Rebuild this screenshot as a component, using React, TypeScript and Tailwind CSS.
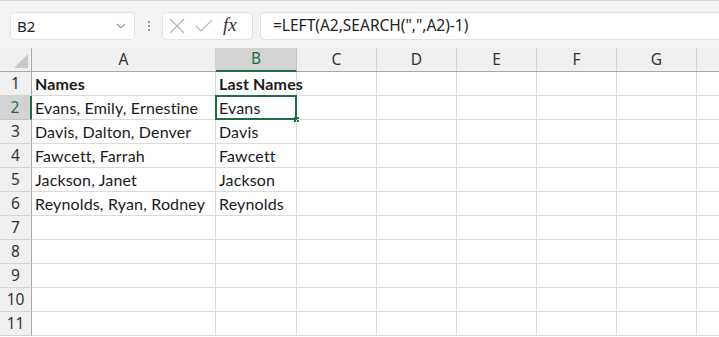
import { ChevronDown } from 'lucide-react';

const cols = ['A', 'B', 'C', 'D', 'E', 'F', 'G', ''];
const widths = ['w-[184px]', 'w-[81px]', 'w-[80px]', 'w-[80px]', 'w-[80px]', 'w-[80px]', 'w-[80px]', 'w-[80px]'];

const data: Record<number, [string, string]> = {
    1: ['Names', 'Last Names'],
    2: ['Evans, Emily, Ernestine', 'Evans'],
    3: ['Davis, Dalton, Denver', 'Davis'],
    4: ['Fawcett, Farrah', 'Fawcett'],
    5: ['Jackson, Janet', 'Jackson'],
    6: ['Reynolds, Ryan, Rodney', 'Reynolds'],
};

const rows = [1, 2, 3, 4, 5, 6, 7, 8, 9, 10, 11];

export default function App() {
    return (
        <div className="w-[719px] h-[337px] overflow-hidden bg-white font-['Noto_Sans',sans-serif] text-[#222]">
            {/* Toolbar */}
            <div className="h-[48px] bg-[#f3f3f3] border-t border-[#d6d6d6] flex items-start pt-[11px] pl-[10px]">
                <div className="w-[125px] h-[28px] bg-white border border-[#e1e1e1] rounded-[5px] flex items-center justify-between pl-[6px] pr-[6px]">
                    <span className="text-[15px] leading-none">B2</span>
                    <ChevronDown className="w-[14px] h-[14px] text-[#444]" strokeWidth={1.5} />
                </div>
                <div className="w-[27px] h-[28px] flex flex-col items-center justify-center gap-[2px]">
                    <span className="w-[2px] h-[2px] bg-[#9a9a9a]" />
                    <span className="w-[2px] h-[2px] bg-[#9a9a9a]" />
                    <span className="w-[2px] h-[2px] bg-[#9a9a9a]" />
                </div>
                <div className="w-[91px] h-[28px] bg-white border border-[#e1e1e1] rounded-[5px] flex items-center pl-[6px] gap-[10px]">
                    <svg width="16" height="16" viewBox="0 0 16 16" className="text-[#b5b5b5]">
                        <path d="M1 1 L15 15 M15 1 L1 15" stroke="currentColor" strokeWidth="1.2" fill="none" />
                    </svg>
                    <svg width="18" height="14" viewBox="0 0 18 14" className="text-[#b5b5b5]">
                        <path d="M1 7 L6 12 L17 1" stroke="currentColor" strokeWidth="1.2" fill="none" />
                    </svg>
                    <span className="font-['Liberation_Serif',serif] italic text-[19px] leading-none text-[#333] -mt-[3px]">fx</span>
                </div>
                <div className="flex-1 h-[28px] bg-white border border-[#e1e1e1] border-r-0 rounded-l-[5px] ml-[7px] flex items-center pl-[12px]">
                    <span className="text-[15.5px] leading-none">=LEFT(A2,SEARCH(",",A2)-1)</span>
                </div>
            </div>

            {/* Column headers */}
            <div className="flex h-[24px] bg-[#f0f0f0] border-b border-[#a8a8a8]">
                <div className="w-[32px] shrink-0 border-r border-[#a8a8a8] relative">
                    <svg width="14" height="14" viewBox="0 0 14 14" className="absolute right-[3px] bottom-[3px]">
                        <path d="M14 0 L14 14 L0 14 Z" fill="#c8c8c8" />
                    </svg>
                </div>
                {cols.map((c, i) =>
                    c === 'B' ? (
                        <div
                            key={i}
                            className={`${widths[i]} shrink-0 bg-[#d3d3d3] border-b-2 border-[#1f6e43] -mb-px flex items-center justify-center text-[15.5px] text-[#1f6e43] border-r border-r-[#c4c4c4]`}
                        >
                            {c}
                        </div>
                    ) : (
                        <div
                            key={i}
                            className={`${widths[i]} shrink-0 flex items-center justify-center text-[15.5px] text-[#333] border-r border-[#d4d4d4]`}
                        >
                            {c}
                        </div>
                    )
                )}
            </div>

            {/* Rows */}
            {rows.map((r) => (
                <div key={r} className="flex h-[24px]">
                    {r === 2 ? (
                        <div className="w-[32px] shrink-0 bg-[#d3d3d3] border-r-2 border-[#1f6e43] border-b border-b-[#c4c4c4] flex items-center justify-center text-[15.5px] text-[#1f6e43]">
                            {r}
                        </div>
                    ) : (
                        <div className="w-[32px] shrink-0 bg-[#f0f0f0] border-r border-[#a8a8a8] border-b border-b-[#d4d4d4] flex items-center justify-center text-[15.5px] text-[#333]">
                            {r}
                        </div>
                    )}
                    {cols.map((c, i) => {
                        const text = c === 'A' ? data[r]?.[0] : c === 'B' ? data[r]?.[1] : undefined;
                        const active = r === 2 && c === 'B';
                        return (
                            <div
                                key={i}
                                className={`${widths[i]} shrink-0 border-r border-b border-[#dadada] flex items-center pl-[3px] font-['Lato',sans-serif] text-[16px] tracking-[0.15px] text-[#1a1a1a] whitespace-nowrap relative ${r === 1 ? 'font-bold' : ''}`}
                            >
                                {text}
                                {active && (
                                    <>
                                        <div className="absolute -left-px -top-px w-[82px] h-[25px] border-2 border-[#1f6e43]" />
                                        <div className="absolute -right-[3px] -bottom-[3px] w-[5px] h-[5px] bg-[#1f6e43]" />
                                    </>
                                )}
                            </div>
                        );
                    })}
                </div>
            ))}
        </div>
    );
}
